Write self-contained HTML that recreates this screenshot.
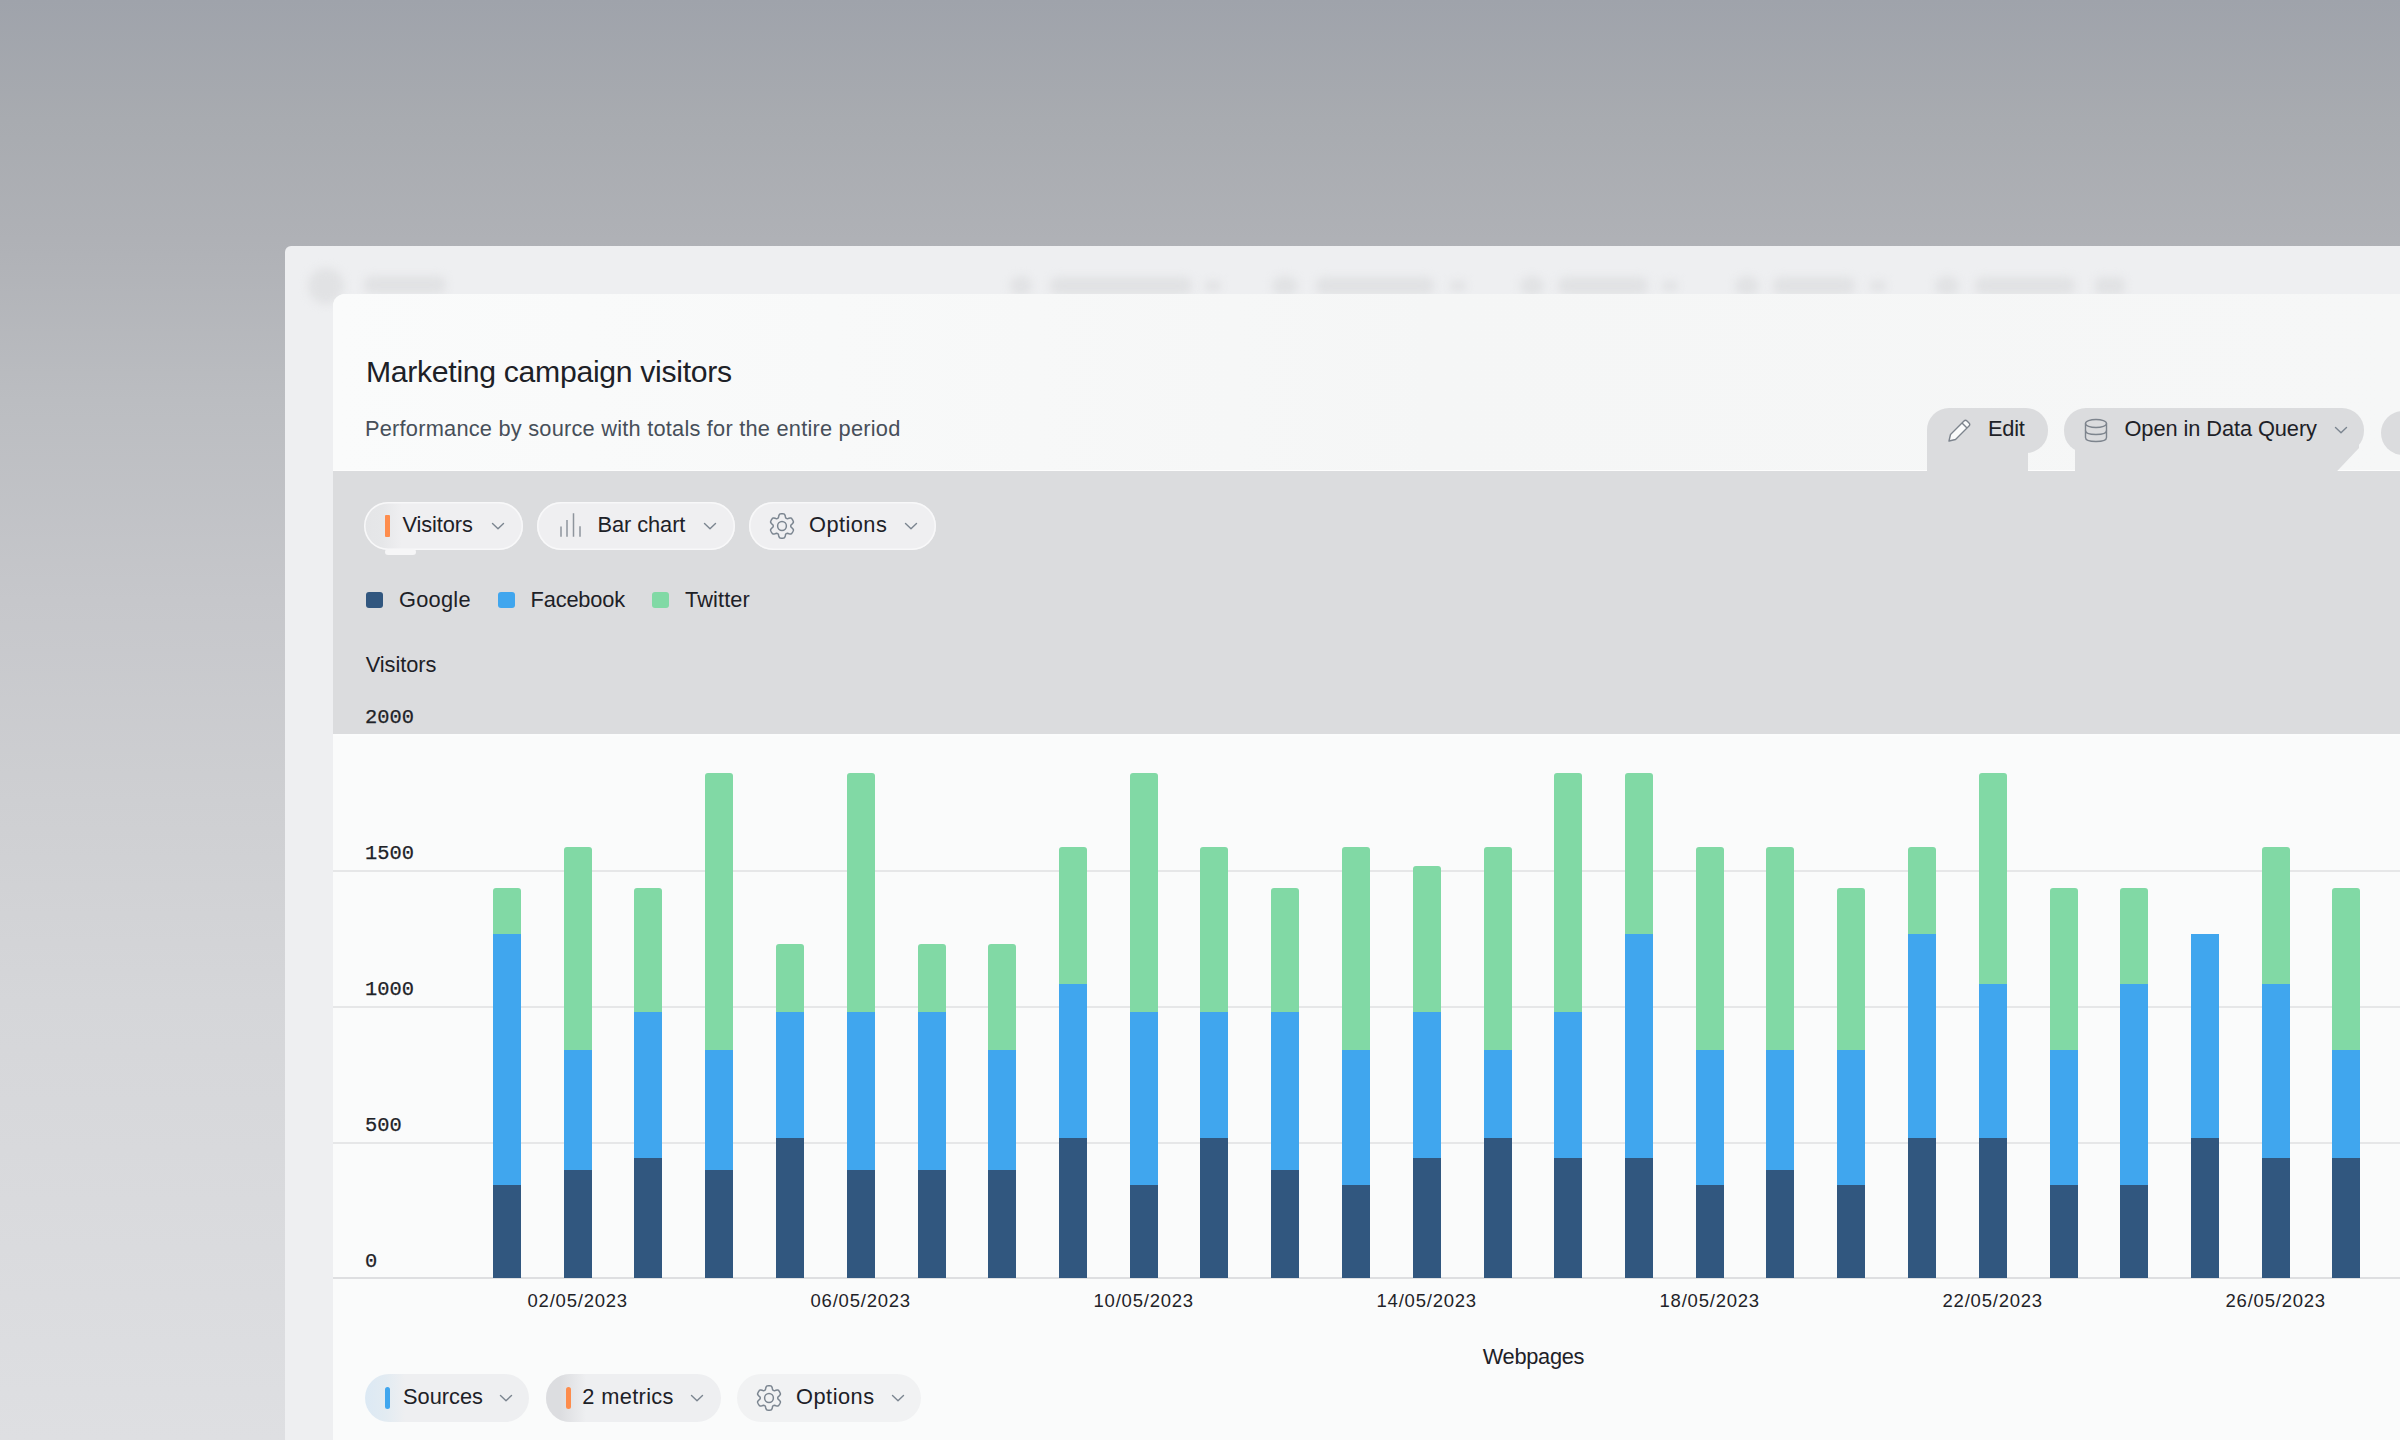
<!DOCTYPE html>
<html><head><meta charset="utf-8">
<style>
html,body{margin:0;padding:0;}
body{width:2400px;height:1440px;overflow:hidden;position:relative;font-family:"Liberation Sans",sans-serif;-webkit-font-smoothing:antialiased;
background:linear-gradient(to bottom,#9fa3ab 0px,#a8abb0 120px,#afb1b6 240px,#bbbdc1 400px,#c6c7cb 600px,#cecfd2 800px,#d5d6d9 1000px,#d9dadd 1200px,#dedfe2 1440px);}
.abs{position:absolute;}
#panel{left:285px;top:246px;width:2200px;height:1300px;background:#eeeff1;border-radius:6px;}
#card{left:333px;top:294px;width:2200px;height:1300px;background:#fafbfb;border-radius:12px 0 0 0;}
#band{left:333px;top:471px;width:2100px;height:263px;background:#dbdcde;}
.blur{position:absolute;background:#e1e2e4;filter:blur(4px);}
.txt{position:absolute;white-space:nowrap;line-height:1;}
.pill{position:absolute;height:48px;border-radius:24px;background:#efeff1;box-shadow:0 0 0 1.5px #f8f8f9 inset;}
.grid{position:absolute;left:333px;width:2100px;height:2px;background:#e6e7e8;}
.bar{position:absolute;width:28px;}
.g{background:#81d9a5;border-radius:3px 3px 0 0;}
.b{background:#40a6ee;}
.d{background:#31577f;}
.ylab{position:absolute;font-family:"Liberation Mono",monospace;font-size:20.4px;color:#1f2328;line-height:1;-webkit-text-stroke:0.25px #1f2328;}
.xlab{position:absolute;letter-spacing:0.78px;color:#1f2328;line-height:1;width:200px;text-align:center;white-space:nowrap;}
.bt{position:absolute;background:#dbdcde;}
</style></head>
<body>
<div id="panel" class="abs"></div>
<div class="blur" style="left:308px;top:268px;width:36px;height:36px;border-radius:50%;"></div>
<div class="blur" style="left:364px;top:276px;width:82px;height:18px;border-radius:8px;"></div>
<div class="blur" style="left:1010px;top:276px;width:22px;height:20px;border-radius:50%;"></div>
<div class="blur" style="left:1050px;top:277px;width:142px;height:18px;border-radius:8px;"></div>
<div class="blur" style="left:1205px;top:281px;width:16px;height:10px;border-radius:4px;"></div>
<div class="blur" style="left:1272px;top:276px;width:26px;height:20px;border-radius:50%;"></div>
<div class="blur" style="left:1316px;top:277px;width:118px;height:18px;border-radius:8px;"></div>
<div class="blur" style="left:1450px;top:281px;width:16px;height:10px;border-radius:4px;"></div>
<div class="blur" style="left:1520px;top:276px;width:24px;height:20px;border-radius:50%;"></div>
<div class="blur" style="left:1558px;top:277px;width:90px;height:18px;border-radius:8px;"></div>
<div class="blur" style="left:1662px;top:281px;width:16px;height:10px;border-radius:4px;"></div>
<div class="blur" style="left:1735px;top:276px;width:24px;height:20px;border-radius:50%;"></div>
<div class="blur" style="left:1773px;top:277px;width:82px;height:18px;border-radius:8px;"></div>
<div class="blur" style="left:1870px;top:281px;width:16px;height:10px;border-radius:4px;"></div>
<div class="blur" style="left:1935px;top:276px;width:24px;height:20px;border-radius:50%;"></div>
<div class="blur" style="left:1975px;top:277px;width:100px;height:18px;border-radius:8px;"></div>
<div class="blur" style="left:2095px;top:277px;width:30px;height:18px;border-radius:6px;"></div>
<div id="card" class="abs"></div>
<div class="abs" style="left:333px;top:294px;width:2067px;height:176px;border-radius:12px 0 0 0;background:linear-gradient(to right,#fafbfb 0px,#f8f9f9 500px,#f5f6f6 1100px,#f6f7f7 2067px);"></div>
<div id="band" class="abs"></div>
<div class="abs" style="left:333px;top:470px;width:2100px;height:1px;background:#fdfdfd;"></div>

<div class="txt" style="left:366px;top:357.34px;font-size:30.2px;letter-spacing:-0.31px;color:#1d2127;">Marketing campaign visitors</div>
<div class="txt" style="left:365px;top:417.80px;font-size:21.8px;letter-spacing:0.22px;color:#474f59;">Performance by source with totals for the entire period</div>

<div class="bt" style="left:1927px;top:408px;width:121px;height:45px;border-radius:22px;"></div>
<div class="bt" style="left:1927px;top:430px;width:101px;height:42px;"></div>
<svg class="abs" style="left:1946px;top:416px" width="28" height="28" viewBox="0 0 28 28">
 <path d="M3 25 L4.5 18.5 L18 5 Q19.5 3.5 21 5 L23 7 Q24.5 8.5 23 10 L9.5 23.5 Z" fill="#fafbfb" stroke="#7d848d" stroke-width="1.4" stroke-linejoin="round"/>
 <path d="M16 7 L21 12" stroke="#7d848d" stroke-width="1.4"/>
</svg>
<div class="txt" style="left:1988px;top:418.25px;font-size:21.8px;letter-spacing:-0.23px;color:#1d2127;">Edit</div>

<div class="bt" style="left:2064px;top:408px;width:300px;height:45px;border-radius:22px;"></div>
<div class="bt" style="left:2075px;top:430px;width:284px;height:42px;clip-path:polygon(0 0,100% 0,100% 43%,92% 100%,0 100%);"></div>
<div class="bt" style="left:2381px;top:411px;width:60px;height:44px;border-radius:22px;"></div>
<svg class="abs" style="left:2082px;top:417px" width="28" height="28" viewBox="0 0 28 28">
 <ellipse cx="14" cy="6.5" rx="10.5" ry="4" fill="none" stroke="#7d848d" stroke-width="1.4"/>
 <path d="M3.5 6.5 V20.5 Q3.5 24.5 14 24.5 Q24.5 24.5 24.5 20.5 V6.5" fill="none" stroke="#7d848d" stroke-width="1.4"/>
 <path d="M3.5 13.5 Q3.5 17.5 14 17.5 Q24.5 17.5 24.5 13.5" fill="none" stroke="#7d848d" stroke-width="1.4"/>
</svg>
<div class="txt" style="left:2124.5px;top:418.15px;font-size:21.8px;letter-spacing:-0.08px;color:#1d2127;">Open in Data Query</div>
<svg class="abs" style="left:2334px;top:426px" width="14" height="8" viewBox="-1 -1 14 8"><path d="M0.5 0.5 L6.0 5.7 L11.5 0.5" fill="none" stroke="#7b8590" stroke-width="1.4" stroke-linecap="round" stroke-linejoin="round"/></svg>

<div class="pill" style="left:364px;top:502px;width:159px;background:linear-gradient(to right,#e4e5e7 0px,#e6e7e9 18px,#efeff1 38px);"></div>
<div class="abs" style="left:385px;top:549px;width:31px;height:6px;border-radius:3px;background:#f6f6f7;"></div>
<div class="abs" style="left:385px;top:515px;width:5px;height:22px;border-radius:1px;background:#fe8d4d;"></div>
<div class="txt" style="left:402.5px;top:513.65px;font-size:21.8px;letter-spacing:-0.11px;color:#1d2127;">Visitors</div>
<svg class="abs" style="left:490.5px;top:522px" width="14" height="8" viewBox="-1 -1 14 8"><path d="M0.5 0.5 L6.0 5.7 L11.5 0.5" fill="none" stroke="#7b8590" stroke-width="1.4" stroke-linecap="round" stroke-linejoin="round"/></svg>

<div class="pill" style="left:537px;top:502px;width:198px;"></div>
<svg class="abs" style="left:557px;top:511px" width="28" height="28" viewBox="0 0 28 28">
 <path d="M4 25.7 V15.5 M10 25.7 V9 M16.5 25.7 V2.3 M23 25.7 V15.3" stroke="#8e959d" stroke-width="1.5"/>
</svg>
<div class="txt" style="left:597.4px;top:513.65px;font-size:21.8px;letter-spacing:-0.05px;color:#1d2127;">Bar chart</div>
<svg class="abs" style="left:703px;top:522px" width="14" height="8" viewBox="-1 -1 14 8"><path d="M0.5 0.5 L6.0 5.7 L11.5 0.5" fill="none" stroke="#7b8590" stroke-width="1.4" stroke-linecap="round" stroke-linejoin="round"/></svg>

<div class="pill" style="left:749px;top:502px;width:187px;"></div>
<svg class="abs" style="left:767.5px;top:511.79999999999995px" width="28" height="28" viewBox="0 0 28 28"><path d="M22.80 14.00 L22.79 13.54 L22.98 13.06 L23.53 12.49 L24.27 11.82 L24.96 11.06 L25.39 10.30 L25.39 9.63 L25.15 9.04 L24.87 8.46 L24.57 7.90 L24.23 7.36 L23.87 6.83 L23.48 6.32 L22.90 5.99 L22.03 5.97 L21.03 6.20 L20.07 6.50 L19.31 6.70 L18.79 6.62 L18.40 6.38 L18.00 6.16 L17.67 5.75 L17.46 4.99 L17.24 4.01 L16.94 3.04 L16.49 2.29 L15.91 1.95 L15.28 1.87 L14.64 1.82 L14.00 1.80 L13.36 1.82 L12.72 1.87 L12.09 1.95 L11.51 2.29 L11.06 3.04 L10.76 4.01 L10.54 4.99 L10.33 5.75 L10.00 6.16 L9.60 6.38 L9.21 6.62 L8.69 6.70 L7.93 6.50 L6.97 6.20 L5.97 5.97 L5.10 5.99 L4.52 6.32 L4.13 6.83 L3.77 7.36 L3.43 7.90 L3.13 8.46 L2.85 9.04 L2.61 9.63 L2.61 10.30 L3.04 11.06 L3.73 11.82 L4.47 12.49 L5.02 13.06 L5.21 13.54 L5.20 14.00 L5.21 14.46 L5.02 14.94 L4.47 15.51 L3.73 16.18 L3.04 16.94 L2.61 17.70 L2.61 18.37 L2.85 18.96 L3.13 19.54 L3.43 20.10 L3.77 20.64 L4.13 21.17 L4.52 21.68 L5.10 22.01 L5.97 22.03 L6.97 21.80 L7.93 21.50 L8.69 21.30 L9.21 21.38 L9.60 21.62 L10.00 21.84 L10.33 22.25 L10.54 23.01 L10.76 23.99 L11.06 24.96 L11.51 25.71 L12.09 26.05 L12.72 26.13 L13.36 26.18 L14.00 26.20 L14.64 26.18 L15.28 26.13 L15.91 26.05 L16.49 25.71 L16.94 24.96 L17.24 23.99 L17.46 23.01 L17.67 22.25 L18.00 21.84 L18.40 21.62 L18.79 21.38 L19.31 21.30 L20.07 21.50 L21.03 21.80 L22.03 22.03 L22.90 22.01 L23.48 21.68 L23.87 21.17 L24.23 20.64 L24.57 20.10 L24.87 19.54 L25.15 18.96 L25.39 18.37 L25.39 17.70 L24.96 16.94 L24.27 16.18 L23.53 15.51 L22.98 14.94 L22.79 14.46Z" fill="none" stroke="#7b8590" stroke-width="1.5" stroke-linejoin="round"/><circle cx="14" cy="14" r="4.4" fill="none" stroke="#7b8590" stroke-width="1.5"/></svg>
<div class="txt" style="left:809px;top:513.65px;font-size:21.8px;letter-spacing:0.45px;color:#1d2127;">Options</div>
<svg class="abs" style="left:903.5px;top:522px" width="14" height="8" viewBox="-1 -1 14 8"><path d="M0.5 0.5 L6.0 5.7 L11.5 0.5" fill="none" stroke="#7b8590" stroke-width="1.4" stroke-linecap="round" stroke-linejoin="round"/></svg>

<div class="abs" style="left:366px;top:592px;width:16.5px;height:16px;border-radius:3px;background:#31577f;"></div>
<div class="txt" style="left:399px;top:589.45px;font-size:21.8px;letter-spacing:0.26px;color:#1d2127;">Google</div>
<div class="abs" style="left:498px;top:592px;width:16.5px;height:16px;border-radius:3px;background:#40a6ee;"></div>
<div class="txt" style="left:530.6px;top:589.45px;font-size:21.8px;letter-spacing:-0.17px;color:#1d2127;">Facebook</div>
<div class="abs" style="left:652px;top:592px;width:16.5px;height:16px;border-radius:3px;background:#81d9a5;"></div>
<div class="txt" style="left:685px;top:589.45px;font-size:21.8px;letter-spacing:0.1px;color:#1d2127;">Twitter</div>

<div class="txt" style="left:365.75px;top:653.55px;font-size:21.8px;letter-spacing:-0.07px;color:#1d2127;">Visitors</div>

<div class="grid" style="top:734px;background:#fbfcfc;"></div>
<div class="grid" style="top:870px;"></div>
<div class="grid" style="top:1006px;"></div>
<div class="grid" style="top:1142px;"></div>
<div class="grid" style="top:1277px;background:#dedfe1;"></div>

<div class="ylab" style="left:365px;top:708px;">2000</div>
<div class="ylab" style="left:365px;top:844px;">1500</div>
<div class="ylab" style="left:365px;top:980px;">1000</div>
<div class="ylab" style="left:365px;top:1116px;">500</div>
<div class="ylab" style="left:365px;top:1252px;">0</div>

<div class="bar g" style="left:493px;top:888px;height:46px"></div>
<div class="bar b" style="left:493px;top:934px;height:251px"></div>
<div class="bar d" style="left:493px;top:1185px;height:93px"></div>
<div class="bar g" style="left:564px;top:847px;height:203px"></div>
<div class="bar b" style="left:564px;top:1050px;height:120px"></div>
<div class="bar d" style="left:564px;top:1170px;height:108px"></div>
<div class="bar g" style="left:634px;top:888px;height:124px"></div>
<div class="bar b" style="left:634px;top:1012px;height:146px"></div>
<div class="bar d" style="left:634px;top:1158px;height:120px"></div>
<div class="bar g" style="left:705px;top:773px;height:277px"></div>
<div class="bar b" style="left:705px;top:1050px;height:120px"></div>
<div class="bar d" style="left:705px;top:1170px;height:108px"></div>
<div class="bar g" style="left:776px;top:944px;height:68px"></div>
<div class="bar b" style="left:776px;top:1012px;height:126px"></div>
<div class="bar d" style="left:776px;top:1138px;height:140px"></div>
<div class="bar g" style="left:847px;top:773px;height:239px"></div>
<div class="bar b" style="left:847px;top:1012px;height:158px"></div>
<div class="bar d" style="left:847px;top:1170px;height:108px"></div>
<div class="bar g" style="left:918px;top:944px;height:68px"></div>
<div class="bar b" style="left:918px;top:1012px;height:158px"></div>
<div class="bar d" style="left:918px;top:1170px;height:108px"></div>
<div class="bar g" style="left:988px;top:944px;height:106px"></div>
<div class="bar b" style="left:988px;top:1050px;height:120px"></div>
<div class="bar d" style="left:988px;top:1170px;height:108px"></div>
<div class="bar g" style="left:1059px;top:847px;height:137px"></div>
<div class="bar b" style="left:1059px;top:984px;height:154px"></div>
<div class="bar d" style="left:1059px;top:1138px;height:140px"></div>
<div class="bar g" style="left:1130px;top:773px;height:239px"></div>
<div class="bar b" style="left:1130px;top:1012px;height:173px"></div>
<div class="bar d" style="left:1130px;top:1185px;height:93px"></div>
<div class="bar g" style="left:1200px;top:847px;height:165px"></div>
<div class="bar b" style="left:1200px;top:1012px;height:126px"></div>
<div class="bar d" style="left:1200px;top:1138px;height:140px"></div>
<div class="bar g" style="left:1271px;top:888px;height:124px"></div>
<div class="bar b" style="left:1271px;top:1012px;height:158px"></div>
<div class="bar d" style="left:1271px;top:1170px;height:108px"></div>
<div class="bar g" style="left:1342px;top:847px;height:203px"></div>
<div class="bar b" style="left:1342px;top:1050px;height:135px"></div>
<div class="bar d" style="left:1342px;top:1185px;height:93px"></div>
<div class="bar g" style="left:1413px;top:866px;height:146px"></div>
<div class="bar b" style="left:1413px;top:1012px;height:146px"></div>
<div class="bar d" style="left:1413px;top:1158px;height:120px"></div>
<div class="bar g" style="left:1484px;top:847px;height:203px"></div>
<div class="bar b" style="left:1484px;top:1050px;height:88px"></div>
<div class="bar d" style="left:1484px;top:1138px;height:140px"></div>
<div class="bar g" style="left:1554px;top:773px;height:239px"></div>
<div class="bar b" style="left:1554px;top:1012px;height:146px"></div>
<div class="bar d" style="left:1554px;top:1158px;height:120px"></div>
<div class="bar g" style="left:1625px;top:773px;height:161px"></div>
<div class="bar b" style="left:1625px;top:934px;height:224px"></div>
<div class="bar d" style="left:1625px;top:1158px;height:120px"></div>
<div class="bar g" style="left:1696px;top:847px;height:203px"></div>
<div class="bar b" style="left:1696px;top:1050px;height:135px"></div>
<div class="bar d" style="left:1696px;top:1185px;height:93px"></div>
<div class="bar g" style="left:1766px;top:847px;height:203px"></div>
<div class="bar b" style="left:1766px;top:1050px;height:120px"></div>
<div class="bar d" style="left:1766px;top:1170px;height:108px"></div>
<div class="bar g" style="left:1837px;top:888px;height:162px"></div>
<div class="bar b" style="left:1837px;top:1050px;height:135px"></div>
<div class="bar d" style="left:1837px;top:1185px;height:93px"></div>
<div class="bar g" style="left:1908px;top:847px;height:87px"></div>
<div class="bar b" style="left:1908px;top:934px;height:204px"></div>
<div class="bar d" style="left:1908px;top:1138px;height:140px"></div>
<div class="bar g" style="left:1979px;top:773px;height:211px"></div>
<div class="bar b" style="left:1979px;top:984px;height:154px"></div>
<div class="bar d" style="left:1979px;top:1138px;height:140px"></div>
<div class="bar g" style="left:2050px;top:888px;height:162px"></div>
<div class="bar b" style="left:2050px;top:1050px;height:135px"></div>
<div class="bar d" style="left:2050px;top:1185px;height:93px"></div>
<div class="bar g" style="left:2120px;top:888px;height:96px"></div>
<div class="bar b" style="left:2120px;top:984px;height:201px"></div>
<div class="bar d" style="left:2120px;top:1185px;height:93px"></div>
<div class="bar b" style="left:2191px;top:934px;height:204px"></div>
<div class="bar d" style="left:2191px;top:1138px;height:140px"></div>
<div class="bar g" style="left:2262px;top:847px;height:137px"></div>
<div class="bar b" style="left:2262px;top:984px;height:174px"></div>
<div class="bar d" style="left:2262px;top:1158px;height:120px"></div>
<div class="bar g" style="left:2332px;top:888px;height:162px"></div>
<div class="bar b" style="left:2332px;top:1050px;height:108px"></div>
<div class="bar d" style="left:2332px;top:1158px;height:120px"></div>

<div class="xlab" style="left:477.75px;top:1292.09px;font-size:18.5px;">02/05/2023</div>
<div class="xlab" style="left:760.75px;top:1292.09px;font-size:18.5px;">06/05/2023</div>
<div class="xlab" style="left:1043.75px;top:1292.09px;font-size:18.5px;">10/05/2023</div>
<div class="xlab" style="left:1326.75px;top:1292.09px;font-size:18.5px;">14/05/2023</div>
<div class="xlab" style="left:1609.75px;top:1292.09px;font-size:18.5px;">18/05/2023</div>
<div class="xlab" style="left:1892.75px;top:1292.09px;font-size:18.5px;">22/05/2023</div>
<div class="xlab" style="left:2175.75px;top:1292.09px;font-size:18.5px;">26/05/2023</div>

<div class="txt" style="left:1482.7px;top:1346.05px;font-size:21.8px;letter-spacing:-0.29px;color:#1d2127;">Webpages</div>

<div class="pill" style="left:365px;top:1374px;width:164px;background:linear-gradient(to right,#dce9f4 0px,#e2ebf2 20px,#eeeff1 40px);box-shadow:none;"></div>
<div class="abs" style="left:385px;top:1387px;width:5px;height:22px;border-radius:2.5px;background:#40a6ee;"></div>
<div class="txt" style="left:403px;top:1385.85px;font-size:21.8px;letter-spacing:0px;color:#1d2127;">Sources</div>
<svg class="abs" style="left:498.7px;top:1394px" width="14" height="8" viewBox="-1 -1 14 8"><path d="M0.5 0.5 L6.0 5.7 L11.5 0.5" fill="none" stroke="#7b8590" stroke-width="1.4" stroke-linecap="round" stroke-linejoin="round"/></svg>

<div class="pill" style="left:546px;top:1374px;width:175px;background:#eeeff1;box-shadow:none;"></div>
<div class="abs" style="left:546px;top:1374px;width:40px;height:48px;border-radius:24px 0 0 24px;background:linear-gradient(to right,#dcdde0 0px,#dcdde0 14px,#eeeff1 40px);"></div>
<div class="abs" style="left:565.5px;top:1387px;width:5px;height:22px;border-radius:2.5px;background:#fd8c4c;"></div>
<div class="txt" style="left:582.3px;top:1385.85px;font-size:21.8px;letter-spacing:0.35px;color:#1d2127;">2 metrics</div>
<svg class="abs" style="left:689.8px;top:1394px" width="14" height="8" viewBox="-1 -1 14 8"><path d="M0.5 0.5 L6.0 5.7 L11.5 0.5" fill="none" stroke="#7b8590" stroke-width="1.4" stroke-linecap="round" stroke-linejoin="round"/></svg>

<div class="pill" style="left:737px;top:1374px;width:184px;background:#f1f2f3;box-shadow:none;"></div>
<svg class="abs" style="left:755px;top:1384.3px" width="28" height="28" viewBox="0 0 28 28"><path d="M22.80 14.00 L22.79 13.54 L22.98 13.06 L23.53 12.49 L24.27 11.82 L24.96 11.06 L25.39 10.30 L25.39 9.63 L25.15 9.04 L24.87 8.46 L24.57 7.90 L24.23 7.36 L23.87 6.83 L23.48 6.32 L22.90 5.99 L22.03 5.97 L21.03 6.20 L20.07 6.50 L19.31 6.70 L18.79 6.62 L18.40 6.38 L18.00 6.16 L17.67 5.75 L17.46 4.99 L17.24 4.01 L16.94 3.04 L16.49 2.29 L15.91 1.95 L15.28 1.87 L14.64 1.82 L14.00 1.80 L13.36 1.82 L12.72 1.87 L12.09 1.95 L11.51 2.29 L11.06 3.04 L10.76 4.01 L10.54 4.99 L10.33 5.75 L10.00 6.16 L9.60 6.38 L9.21 6.62 L8.69 6.70 L7.93 6.50 L6.97 6.20 L5.97 5.97 L5.10 5.99 L4.52 6.32 L4.13 6.83 L3.77 7.36 L3.43 7.90 L3.13 8.46 L2.85 9.04 L2.61 9.63 L2.61 10.30 L3.04 11.06 L3.73 11.82 L4.47 12.49 L5.02 13.06 L5.21 13.54 L5.20 14.00 L5.21 14.46 L5.02 14.94 L4.47 15.51 L3.73 16.18 L3.04 16.94 L2.61 17.70 L2.61 18.37 L2.85 18.96 L3.13 19.54 L3.43 20.10 L3.77 20.64 L4.13 21.17 L4.52 21.68 L5.10 22.01 L5.97 22.03 L6.97 21.80 L7.93 21.50 L8.69 21.30 L9.21 21.38 L9.60 21.62 L10.00 21.84 L10.33 22.25 L10.54 23.01 L10.76 23.99 L11.06 24.96 L11.51 25.71 L12.09 26.05 L12.72 26.13 L13.36 26.18 L14.00 26.20 L14.64 26.18 L15.28 26.13 L15.91 26.05 L16.49 25.71 L16.94 24.96 L17.24 23.99 L17.46 23.01 L17.67 22.25 L18.00 21.84 L18.40 21.62 L18.79 21.38 L19.31 21.30 L20.07 21.50 L21.03 21.80 L22.03 22.03 L22.90 22.01 L23.48 21.68 L23.87 21.17 L24.23 20.64 L24.57 20.10 L24.87 19.54 L25.15 18.96 L25.39 18.37 L25.39 17.70 L24.96 16.94 L24.27 16.18 L23.53 15.51 L22.98 14.94 L22.79 14.46Z" fill="none" stroke="#7b8590" stroke-width="1.5" stroke-linejoin="round"/><circle cx="14" cy="14" r="4.4" fill="none" stroke="#7b8590" stroke-width="1.5"/></svg>
<div class="txt" style="left:796px;top:1385.85px;font-size:21.8px;letter-spacing:0.5px;color:#1d2127;">Options</div>
<svg class="abs" style="left:890.5px;top:1394px" width="14" height="8" viewBox="-1 -1 14 8"><path d="M0.5 0.5 L6.0 5.7 L11.5 0.5" fill="none" stroke="#7b8590" stroke-width="1.4" stroke-linecap="round" stroke-linejoin="round"/></svg>

</body></html>
